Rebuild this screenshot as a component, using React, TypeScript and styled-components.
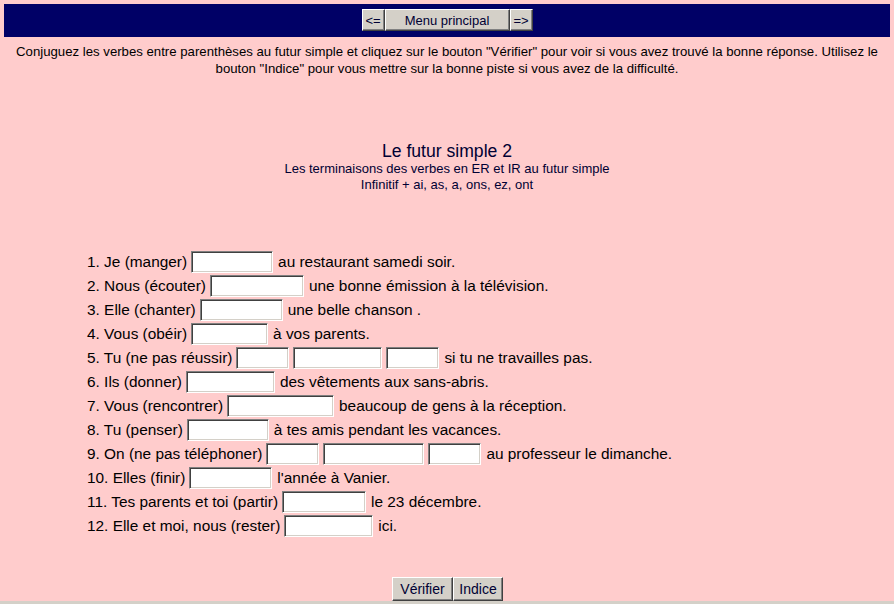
import styled, { createGlobalStyle } from 'styled-components'

/**
 * Data
 */
type Item = { label: string, inputs: number[], after: string }

const items: Item[] = [
  { label: '1. Je (manger)', inputs: [82], after: 'au restaurant samedi soir.' },
  { label: '2. Nous (écouter)', inputs: [94], after: 'une bonne émission à la télévision.' },
  { label: '3. Elle (chanter)', inputs: [83], after: 'une belle chanson .' },
  { label: '4. Vous (obéir)', inputs: [77], after: 'à vos parents.' },
  { label: '5. Tu (ne pas réussir)', inputs: [53, 89, 53], after: 'si tu ne travailles pas.' },
  { label: '6. Ils (donner)', inputs: [89], after: 'des vêtements aux sans-abris.' },
  { label: '7. Vous (rencontrer)', inputs: [107], after: 'beaucoup de gens à la réception.' },
  { label: '8. Tu (penser)', inputs: [82], after: 'à tes amis pendant les vacances.' },
  { label: '9. On (ne pas téléphoner)', inputs: [53, 101, 53], after: 'au professeur le dimanche.' },
  { label: '10. Elles (finir)', inputs: [83], after: 'l\'année à Vanier.' },
  { label: '11. Tes parents et toi (partir)', inputs: [84], after: 'le 23 décembre.' },
  { label: '12. Elle et moi, nous (rester)', inputs: [89], after: 'ici.' }
]

/**
 * Component
 */
const App = () => {
  return (
    <>
      <GlobalStyle />
      <Page>
        <NavBar>
          <NavButton $width={23}>&lt;=</NavButton>
          <NavButton $width={125}>Menu principal</NavButton>
          <NavButton $width={23}>=&gt;</NavButton>
        </NavBar>

        <Intro>
          Conjuguez les verbes entre parenthèses au futur simple et cliquez sur le bouton "Vérifier" pour voir si vous avez trouvé la bonne réponse. Utilisez le bouton "Indice" pour vous mettre sur la bonne piste si vous avez de la difficulté.
        </Intro>

        <Heading>
          <Title>Le futur simple 2</Title>
          <Subtitle>Les terminaisons des verbes en ER et IR au futur simple</Subtitle>
          <Subtitle>Infinitif + ai, as, a, ons, ez, ont</Subtitle>
        </Heading>

        <Exercise>
          {items.map((item) => (
            <Row key={item.label}>
              <span>{item.label}</span>
              {item.inputs.map((w, i) => (
                <Blank key={i} type='text' style={{ width: w }} />
              ))}
              <After>{item.after}</After>
            </Row>
          ))}
        </Exercise>

        <Actions>
          <ActionButton $width={61}>Vérifier</ActionButton>
          <ActionButton $width={50}>Indice</ActionButton>
        </Actions>
      </Page>
      <Frame />
    </>
  )
}

/**
 * Styled Component
 */
const GlobalStyle = createGlobalStyle`
  html, body {
    margin: 0;
    padding: 0;
    overflow: hidden;
    background: #ffcccc;
  }
  body {
    font-family: "Liberation Sans", Arial, sans-serif;
    color: #000;
  }
`

const Page = styled.div`
  padding: 4px 4px 0 4px;
  display: flex;
  flex-direction: column;
`

const NavBar = styled.div`
  height: 33px;
  background: #000066;
  display: flex;
  justify-content: center;
  align-items: center;
  padding-bottom: 1px;
  box-sizing: border-box;
`

const winButton = `
  background: #d4d0c8;
  border: 1px solid;
  border-color: #ffffff #404040 #404040 #ffffff;
  box-shadow: inset -1px -1px 0 #808080;
  font-family: "Liberation Sans", Arial, sans-serif;
  color: #000033;
  padding: 0;
  box-sizing: border-box;
  cursor: pointer;
`

const NavButton = styled.button<{ $width: number }>`
  ${winButton}
  width: ${(p) => p.$width}px;
  height: 22px;
  font-size: 13px;
`

const Intro = styled.p`
  margin: 6px 8px 0;
  font-size: 13.2px;
  line-height: 17px;
  text-align: center;
`

const Heading = styled.div`
  margin-top: 64px;
  display: flex;
  flex-direction: column;
  align-items: center;
  color: #000033;
`

const Title = styled.div`
  font-size: 17.6px;
  line-height: 20px;
`

const Subtitle = styled.div`
  font-size: 13px;
  line-height: 16px;
`

const Exercise = styled.div`
  margin-top: 57px;
  padding-left: 83px;
  display: flex;
  flex-direction: column;
  font-size: 15.4px;
`

const Row = styled.div`
  height: 24px;
  display: flex;
  align-items: center;
  gap: 4px;
  white-space: nowrap;
`

const Blank = styled.input`
  height: 22px;
  box-sizing: border-box;
  background: #fff;
  border: 1px solid;
  border-color: #808080 #ffffff #ffffff #808080;
  box-shadow: inset 1px 1px 0 #404040, inset -1px -1px 0 #d4d0c8;
  padding: 1px 3px;
  margin: 0;
  font-size: 13px;
  font-family: "Liberation Sans", Arial, sans-serif;
`

const After = styled.span`
  margin-left: 1px;
`

const Actions = styled.div`
  margin-top: 39px;
  display: flex;
  justify-content: center;
  padding-left: 1px;
`

const ActionButton = styled.button<{ $width: number }>`
  ${winButton}
  width: ${(p) => p.$width}px;
  height: 24px;
  font-size: 14px;
`

const Frame = styled.div`
  height: 20px;
  background: #d4d0c8;
`

export default App
